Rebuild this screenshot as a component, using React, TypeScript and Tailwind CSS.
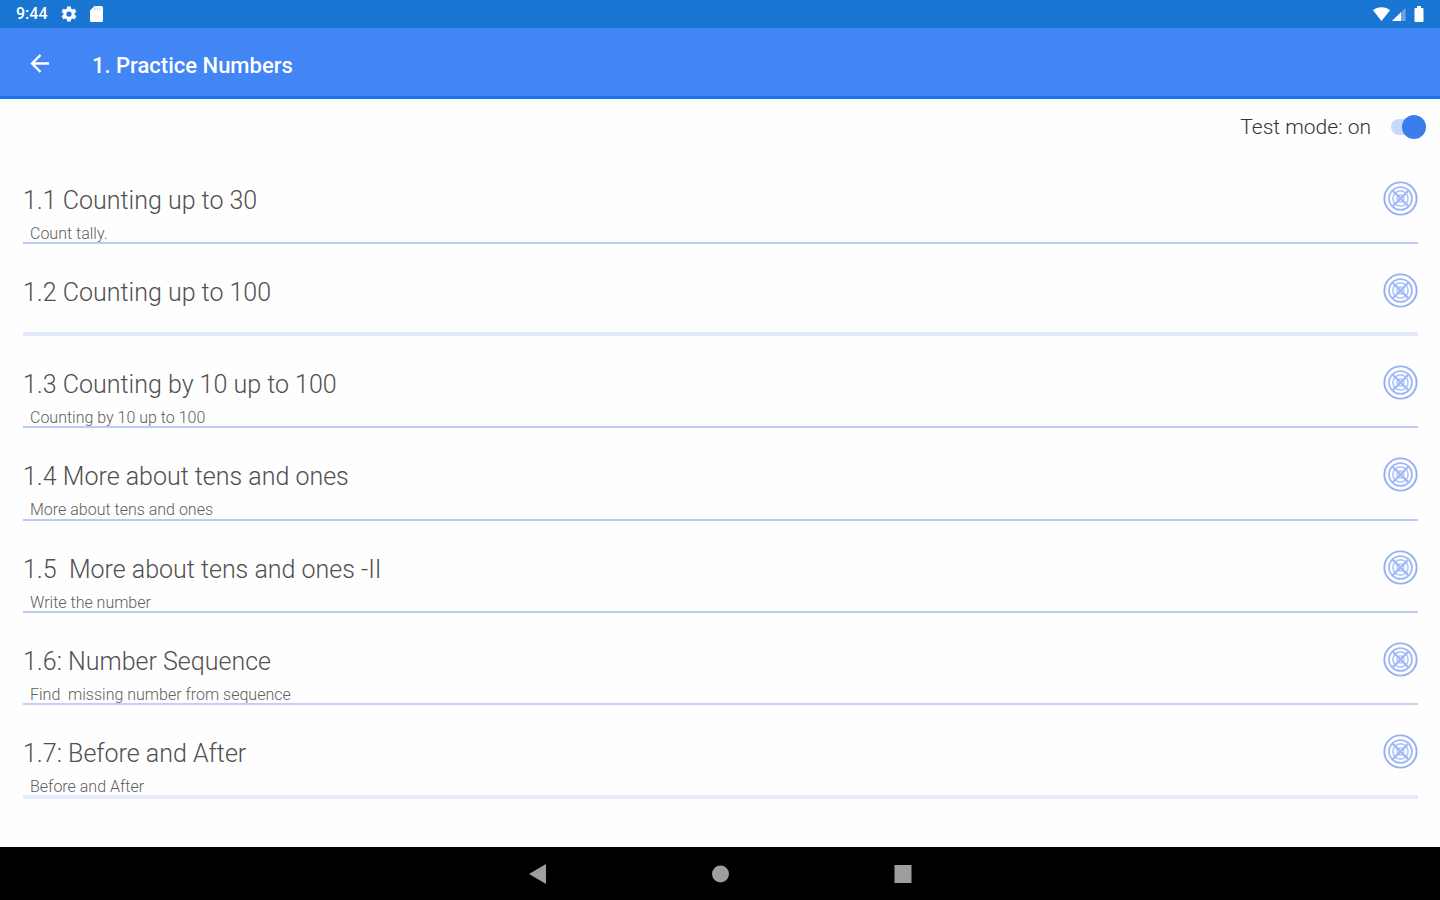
import { useState } from "react";

type Lesson = { title: string; note: string; line: string };

const lessons: Lesson[] = [
  { title: "1.1 Counting up to 30", note: "Count tally.", line: "border-b-2 border-[#bccbf3]" },
  { title: "1.2 Counting up to 100", note: "", line: "border-b-4 border-[#e2e9fb]" },
  { title: "1.3 Counting by 10 up to 100", note: "Counting by 10 up to 100", line: "border-b-2 border-[#bccbf3]" },
  { title: "1.4 More about tens and ones", note: "More about tens and ones", line: "border-b-2 border-[#bccbf3]" },
  { title: "1.5  More about tens and ones -II", note: "Write the number", line: "border-b-2 border-[#bccdf5]" },
  { title: "1.6: Number Sequence", note: "Find  missing number from sequence", line: "border-b-2 border-[#c2cff4]" },
  { title: "1.7: Before and After", note: "Before and After", line: "border-b-4 border-[#e4e9fb]" },
];

function TargetIcon() {
  return (
    <svg viewBox="0 0 36 36" className="size-[35px]" fill="none" stroke="#9db8f5" aria-hidden="true">
      <circle cx="18" cy="18" r="16.6" strokeWidth="2" stroke="#94b0f3" />
      <circle cx="18" cy="18" r="11.8" strokeWidth="1.8" />
      <circle cx="18" cy="18" r="7.800" strokeWidth="1.8" stroke="#b3c8f8" />
      <circle cx="18" cy="18" r="3.600" strokeWidth="1.5" stroke="#b3c8f8" />
      <path d="M10 10l16 16M26 10L10 26" strokeWidth="2.200" />
    </svg>
  );
}

function StatusBar() {
  return (
    <div className="flex h-7 shrink-0 items-center justify-between bg-[#1976d2] px-4 text-white">
      <div className="flex items-center">
        <span className="w-11 text-base leading-5 font-medium">9:44</span>
        <svg viewBox="0 0 24 24" className="size-[18px]" fill="currentColor" aria-hidden="true">
          <path fillRule="evenodd" d="M19.4 13a7.8 7.8 0 0 0 0-2l2.1-1.6a.5.5 0 0 0 .1-.6l-2-3.500a.5.5 0 0 0-.6-.2l-2.500 1a7.300 7.300 0 0 0-1.700-1l-.4-2.600a.5.5 0 0 0-.5-.4h-4a.5.5 0 0 0-.5.4L9 5.100a7.700 7.700 0 0 0-1.700 1l-2.500-1a.5.5 0 0 0-.6.2l-2 3.500a.5.5 0 0 0 .1.600L4.500 11a8 8 0 0 0 0 2l-2.100 1.600a.5.5 0 0 0-.1.600l2 3.500a.5.5 0 0 0 .6.200l2.500-1a7.300 7.300 0 0 0 1.700 1l.4 2.600a.5.5 0 0 0 .5.400h4a.5.5 0 0 0 .5-.4l.4-2.600a7.700 7.700 0 0 0 1.700-1l2.500 1a.5.5 0 0 0 .6-.2l2-3.500a.5.5 0 0 0-.1-.6zM12 15.500a3.500 3.500 0 1 1 0-7 3.500 3.500 0 0 1 0 7z" />
        </svg>
        <svg viewBox="0 0 14 16" className="ml-3 h-4 w-[14px]" fill="currentColor" aria-hidden="true">
          <path d="M4.500 0H11.500a1.500 1.500 0 0 1 1.500 1.500v13a1.500 1.500 0 0 1-1.500 1.500h-10A1.500 1.500 0 0 1 0 14.500V4.500z" />
          <path d="M5 2v2.500M7.500 2v2.500M10 2v2.500" stroke="#1976d2" strokeOpacity=".35" strokeWidth="1" />
        </svg>
      </div>
      <div className="flex items-center">
        <svg viewBox="0 0 18 14" className="h-[14px] w-[18px]" fill="currentColor" aria-hidden="true">
          <path d="M9.500 14L1 3.200C3 1.400 6 .3 9.500.3s6.500 1.100 8.500 2.900z" />
        </svg>
        <svg viewBox="0 0 14 14" className="ml-0.5 size-[14px]" fill="currentColor" aria-hidden="true">
          <path d="M0 14L13.500 1v13z" opacity=".35" />
          <path d="M0 14L9 5.300V14z" />
        </svg>
        <svg viewBox="0 0 10 17" className="ml-2 h-[17px] w-[10px]" fill="currentColor" aria-hidden="true">
          <path d="M3 0h4v2h1.500a1 1 0 0 1 1 1v12a1 1 0 0 1-1 1h-7a1 1 0 0 1-1-1V3a1 1 0 0 1 1-1H3z" />
        </svg>
      </div>
    </div>
  );
}

export default function App() {
  const [testMode, setTestMode] = useState(true);

  return (
    <div className="flex min-h-screen flex-col bg-[#fefefe] font-[Roboto,sans-serif]">
      <StatusBar />
      <header className="flex h-[71px] shrink-0 items-center border-b-[3px] border-[#1a73e8] bg-[#4285f4] pt-1 pl-7 text-white">
        <button type="button" aria-label="Back" className="mr-10 size-6">
          <svg viewBox="0 0 24 24" className="size-6" fill="none" stroke="currentColor" strokeWidth="2.400" aria-hidden="true">
            <path d="M21 11.500H4.500M12.500 3L4 11.500l8.500 8.500" />
          </svg>
        </button>
        <h1 className="pt-1 text-[22px] leading-7 font-medium">1. Practice Numbers</h1>
      </header>

      <main className="flex flex-1 flex-col">
        <div className="flex h-[53px] shrink-0 items-start justify-end pt-3 pr-[14px]">
          <label className="flex cursor-pointer items-center gap-5">
            <span className="text-[21px] leading-8 font-light text-[#333333]">Test mode: {testMode ? "on" : "off"}</span>
            <input
              type="checkbox"
              role="switch"
              checked={testMode}
              onChange={(e) => setTestMode(e.target.checked)}
              className="peer sr-only"
            />
            <span className="flex h-4 w-[35px] items-center rounded-full bg-[#d0d0d0] peer-checked:justify-end peer-checked:bg-[#c6dafb]">
              <span className="size-6 shrink-0 rounded-full bg-[#3b7ded]" />
            </span>
          </label>
        </div>

        <ul className="mr-[22px] mb-12 ml-[23px] flex flex-1 flex-col">
          {lessons.map((lesson) => (
            <li key={lesson.title} className={`flex min-h-[92px] flex-1 items-start justify-between ${lesson.line}`}>
              <div className="pt-[33px]">
                <h2 className="text-[25px] leading-8 font-light whitespace-pre text-[#505050]">{lesson.title}</h2>
                <p className="mt-[10px] pl-[7px] text-base leading-[14px] font-light whitespace-pre text-[#606060]">{lesson.note}</p>
              </div>
              <button type="button" aria-label={`Start ${lesson.title}`} className="mt-[29px] size-[35px]">
                <TargetIcon />
              </button>
            </li>
          ))}
        </ul>
      </main>

      <nav className="flex h-[53px] shrink-0 items-center justify-center gap-[163px] bg-black text-[#9e9e9e]">
        <button type="button" aria-label="Back" className="size-5">
          <svg viewBox="0 0 20 20" className="size-5" fill="currentColor" aria-hidden="true">
            <path d="M19 0v20L2 10z" />
          </svg>
        </button>
        <button type="button" aria-label="Home" className="size-5">
          <svg viewBox="0 0 20 20" className="size-5" fill="currentColor" aria-hidden="true">
            <circle cx="10.500" cy="10" r="8.500" />
          </svg>
        </button>
        <button type="button" aria-label="Recent apps" className="size-5">
          <svg viewBox="0 0 20 20" className="size-5" fill="currentColor" aria-hidden="true">
            <path d="M1.500 1h17v18h-17z" />
          </svg>
        </button>
      </nav>
    </div>
  );
}
